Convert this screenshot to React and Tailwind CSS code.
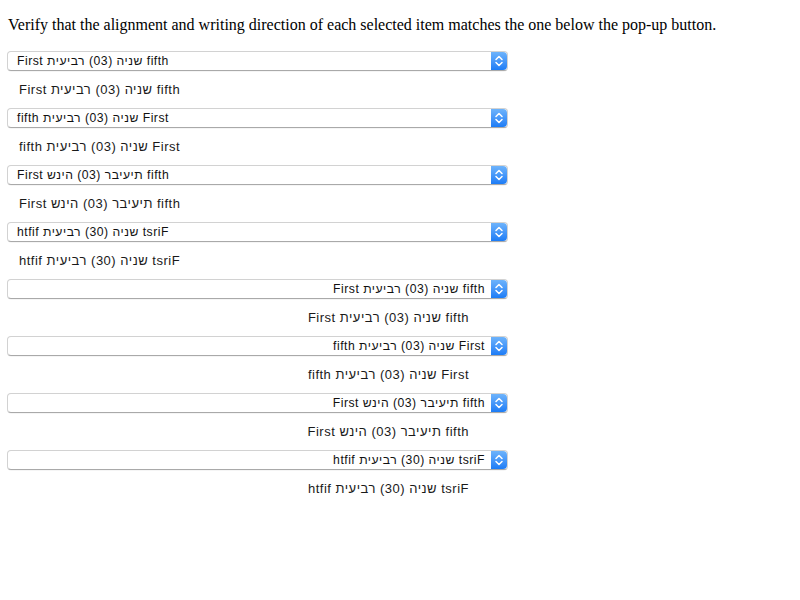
const TEXT = "First שניה (03) רביעית fifth";

const rows = [
  { dir: "ltr", override: false, align: "left" },
  { dir: "rtl", override: false, align: "left" },
  { dir: "ltr", override: true, align: "left" },
  { dir: "rtl", override: true, align: "left" },
  { dir: "ltr", override: false, align: "right" },
  { dir: "rtl", override: false, align: "right" },
  { dir: "ltr", override: true, align: "right" },
  { dir: "rtl", override: true, align: "right" },
];

function Arrows() {
  return (
    <div className="w-[16px] h-full rounded-r-[4px] bg-gradient-to-b from-[#6db3fb] to-[#1b7cf6] flex items-center justify-center">
      <svg width="10" height="14" viewBox="0 0 10 14" fill="none" stroke="white" strokeWidth="1.5" strokeLinecap="round" strokeLinejoin="round">
        <path d="M2 5.5 L5 2.5 L8 5.5" />
        <path d="M2 8.5 L5 11.5 L8 8.5" />
      </svg>
    </div>
  );
}

function PopUp({ dir, override, align }) {
  return (
    <div className="ml-[7px] w-[501px] h-[20px] flex bg-white border border-[#d2d2d2] border-b-[#a9a9a9] rounded-[4px] shadow-[0_0.5px_0.5px_rgba(0,0,0,0.08)]">
      <div
        dir={dir}
        className={`flex-1 min-w-0 text-[12.2px] tracking-[0.5px] leading-[18px] text-[#111] whitespace-nowrap overflow-hidden ${
          override ? "[unicode-bidi:bidi-override]" : "[unicode-bidi:isolate]"
        } ${align === "left" ? "text-left pl-[9px]" : "text-right pr-[6px]"}`}
      >
        {TEXT}
      </div>
      <Arrows />
    </div>
  );
}

function Label({ dir, override, align }) {
  return (
    <div className="w-[500px] ml-[8px] h-[37px] flex items-center">
      <div
        dir={dir}
        className={`w-full text-[13px] tracking-[0.5px] text-[#1a1a1a] whitespace-nowrap ${
          override ? "[unicode-bidi:bidi-override]" : "[unicode-bidi:isolate]"
        } ${align === "left" ? "text-left pl-[11px]" : "text-right pr-[39px]"}`}
      >
        {TEXT}
      </div>
    </div>
  );
}

export default function App() {
  return (
    <div className="w-[800px] h-[600px] bg-white pt-[16px] font-['Liberation_Sans',Arial,sans-serif]">
      <p className="px-[8px] text-[16px] leading-[18px] font-['Liberation_Serif','Times_New_Roman',serif] text-black mb-[17px]">
        Verify that the alignment and writing direction of each selected item matches the one below the pop-up button.
      </p>
      {rows.map((r, i) => (
        <div key={i}>
          <PopUp {...r} />
          <Label {...r} />
        </div>
      ))}
    </div>
  );
}
